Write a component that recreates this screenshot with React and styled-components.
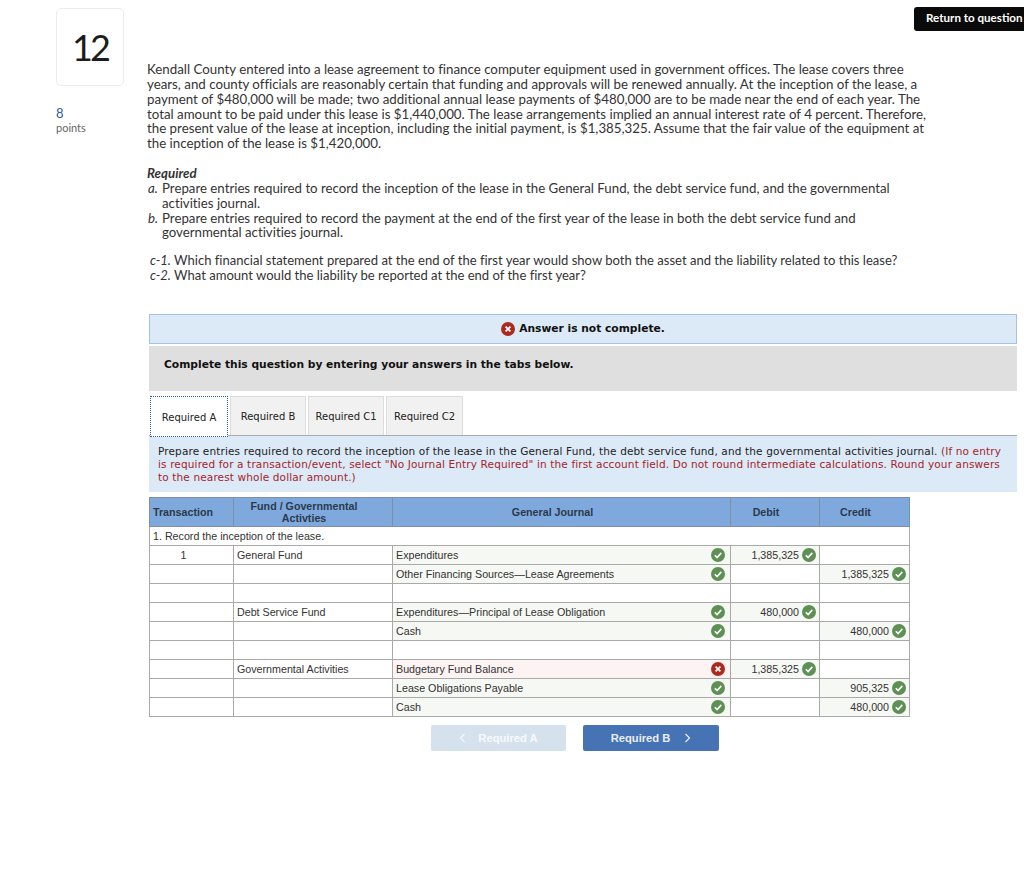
import React from "react"
import styled, { createGlobalStyle } from "styled-components"

const GlobalStyle = createGlobalStyle`
  html, body {
    margin: 0;
    padding: 0;
    background: #fff;
  }
  body {
    overflow: hidden;
    font-family: "Lato", "Liberation Sans", sans-serif;
    font-variant-ligatures: none;
  }
`

const Page = styled.div`
  position: relative;
  width: 1024px;
  height: 887px;
  overflow: hidden;
  display: grid;
  grid-template-columns: 91px 1fr;
  padding: 8px 7px 0 56px;
  box-sizing: border-box;
`

const ReturnButton = styled.button`
  position: absolute;
  top: 7px;
  left: 914px;
  width: 116px;
  height: 24px;
  padding: 0 0 3px 12px;
  text-align: left;
  border: 0;
  border-radius: 3px;
  background: #0a0a0a;
  color: #fff;
  font: 700 11.6px "Lato", "Liberation Sans", sans-serif;
  white-space: nowrap;
`

const Side = styled.aside`
  display: flex;
  flex-direction: column;
`

const NumberBox = styled.div`
  width: 68px;
  height: 78px;
  box-sizing: border-box;
  border: 1px solid #ececec;
  border-radius: 5px;
  display: flex;
  align-items: center;
  justify-content: center;
  font-size: 36px;
  letter-spacing: -3px;
  color: #1c1c1c;
`

const Points = styled.div`
  margin-top: 20px;
  font-size: 11px;
  line-height: 15px;
  color: #666;
  b {
    display: block;
    font-size: 13px;
    line-height: 14px;
    font-weight: 400;
    color: #2b5a9e;
  }
`

const Main = styled.main`
  padding-top: 54px;
  min-width: 0;
`

const Prose = styled.div`
  width: 781px;
  font-size: 13.3px;
  line-height: 14.85px;
  color: #333;
`

const Heading = styled.div`
  margin-top: 15px;
  font-weight: 700;
  font-style: italic;
`

const Hanging = styled.div`
  padding-left: 15px;
  text-indent: -14px;
  width: 745px;
  font-size: 13.25px;
  i {
    display: inline-block;
    text-indent: 0;
    width: 14px;
  }
`

const Parts = styled.div`
  margin-top: 13px;
  padding-left: 3px;
  font-size: 13.05px;
`

const Notice = styled.div`
  margin: 31px 0 0 2px;
  height: 30px;
  box-sizing: border-box;
  background: #dce9f7;
  border: 1px solid #a4c2e4;
  display: flex;
  align-items: center;
  justify-content: center;
  gap: 4px;
  font: 700 10.7px "DejaVu Sans", sans-serif;
  color: #111;
`

const Banner = styled.div`
  margin: 2px 0 0 2px;
  height: 45px;
  box-sizing: border-box;
  padding: 12px 15px 0;
  background: #dfdfdf;
  font: 700 10.7px "DejaVu Sans", sans-serif;
  color: #111;
`

const Tabs = styled.div`
  margin: 5px 0 0 2px;
  height: 40px;
  box-sizing: border-box;
  display: flex;
  gap: 2px;
  padding-left: 1px;
  border-bottom: 1px solid #aaa;
`

const Tab = styled.div`
  height: ${p => (p.$active ? "41px" : "39px")};
  box-sizing: border-box;
  padding-top: 2px;
  display: flex;
  align-items: center;
  justify-content: center;
  width: ${p => p.$w}px;
  font: 400 10px "DejaVu Sans", sans-serif;
  color: #222;
  background: ${p => (p.$active ? "#fff" : "#f1f1f1")};
  border: ${p => (p.$active ? "1px dotted #2459a8" : "1px solid #dcdcdc")};
  border-bottom: ${p => (p.$active ? "1px dotted #2459a8" : "0")};
  white-space: nowrap;
`

const Instruction = styled.div`
  margin-left: 2px;
  height: 56px;
  box-sizing: border-box;
  padding: 9px 8px 0 9px;
  background: #dce9f7;
  font: 400 10.5px/13px "DejaVu Sans", sans-serif;
  color: #222;
  letter-spacing: 0.14px;
  span {
    color: #a5252a;
  }
`

const Journal = styled.table`
  margin: 5px 0 0 2px;
  width: 760px;
  table-layout: fixed;
  border-collapse: collapse;
  font: 400 10.7px "Liberation Sans", sans-serif;
  color: #333;
`

const Head = styled.th`
  height: 28px;
  padding: ${p => (p.$align === "left" ? "0 3px" : "0 18px 0 0")};
  background: #7fa9dd;
  border: 1px solid #7d8fa3;
  font-size: 10.7px;
  line-height: 12px;
  font-weight: 700;
  color: #2a3a4c;
  text-align: ${p => p.$align || "center"};
`

const Cell = styled.td`
  height: 18px;
  padding: ${p => (p.$align === "center" ? "0 16px 0 0" : "0 3px")};
  border: 1px solid #a9a9a9;
  white-space: nowrap;
  background: ${p => (p.$state === "ok" ? "#f6f8f3" : p.$state === "bad" ? "#fdf3f3" : "#fff")};
  text-align: ${p => p.$align || "left"};
`

const CellInner = styled.div`
  display: flex;
  align-items: center;
  justify-content: ${p => (p.$end ? "flex-end" : "space-between")};
  gap: 3px;
  padding-right: ${p => (p.$end ? 0 : 2)}px;
`

const Pager = styled.div`
  margin: 8px 0 0 284px;
  display: flex;
  gap: 17px;
`

const PagerButton = styled.button`
  width: ${p => (p.$next ? 136 : 135)}px;
  height: 26px;
  border: 0;
  border-radius: 2px;
  background: ${p => (p.$next ? "#4673b3" : "#d6e1ee")};
  color: ${p => (p.$next ? "#e8eef7" : "#f7f9fc")};
  font: 700 11.2px "Liberation Sans", sans-serif;
  display: flex;
  align-items: center;
  justify-content: center;
  gap: ${p => (p.$next ? 14 : 12)}px;
`

const Status = ({ ok = true, size = 14 }) => (
  <svg width={size} height={size} viewBox="0 0 14 14" style={{ flex: "none" }}>
    <circle cx="7" cy="7" r="7" fill={ok ? "#5e8f55" : "#ab2a20"} />
    {ok ? (
      <path d="M3.8 7.2 6.1 9.5 10.3 4.9" fill="none" stroke="#fff" strokeWidth="1.6" />
    ) : (
      <path d="M4.6 4.6 9.4 9.4M9.4 4.6 4.6 9.4" fill="none" stroke="#fff" strokeWidth="1.7" />
    )}
  </svg>
)

const Chevron = ({ left }) => (
  <svg width="7" height="10" viewBox="0 0 7 10">
    <path d={left ? "M5.5 1 1.5 5 5.5 9" : "M1.5 1 5.5 5 1.5 9"} fill="none" stroke="currentColor" strokeWidth="1.2" />
  </svg>
)

const rows = [
  { tx: "1", fund: "General Fund", acct: "Expenditures", debit: "1,385,325" },
  { acct: "Other Financing Sources—Lease Agreements", credit: "1,385,325" },
  {},
  { fund: "Debt Service Fund", acct: "Expenditures—Principal of Lease Obligation", debit: "480,000" },
  { acct: "Cash", credit: "480,000" },
  {},
  { fund: "Governmental Activities", acct: "Budgetary Fund Balance", debit: "1,385,325", bad: true },
  { acct: "Lease Obligations Payable", credit: "905,325" },
  { acct: "Cash", credit: "480,000" },
]

const Amount = ({ value }) => (
  <Cell $state={value ? "ok" : undefined}>
    {value && (
      <CellInner $end>
        {value}
        <Status />
      </CellInner>
    )}
  </Cell>
)

export default function App() {
  return (
    <Page>
      <GlobalStyle />
      <ReturnButton>Return to question</ReturnButton>
      <Side>
        <NumberBox>12</NumberBox>
        <Points>
          <b>8</b>
          points
        </Points>
      </Side>
      <Main>
        <Prose>
          Kendall County entered into a lease agreement to finance computer equipment used in government offices. The
          lease covers three years, and county officials are reasonably certain that funding and approvals will be
          renewed annually. At the inception of the lease, a payment of $480,000 will be made; two additional annual
          lease payments of $480,000 are to be made near the end of each year. The total amount to be paid under this
          lease is $1,440,000. The lease arrangements implied an annual interest rate of 4 percent. Therefore, the
          present value of the lease at inception, including the initial payment, is $1,385,325. Assume that the fair
          value of the equipment at the inception of the lease is $1,420,000.
          <Heading>Required</Heading>
          <Hanging>
            <i>a.</i>Prepare entries required to record the inception of the lease in the General Fund, the debt
            service fund, and the governmental activities journal.
          </Hanging>
          <Hanging>
            <i>b.</i>Prepare entries required to record the payment at the end of the first year of the lease in both
            the debt service fund and governmental activities journal.
          </Hanging>
          <Parts>
            <div>
              <em>c-1.</em> Which financial statement prepared at the end of the first year would show both the asset
              and the liability related to this lease?
            </div>
            <div>
              <em>c-2.</em> What amount would the liability be reported at the end of the first year?
            </div>
          </Parts>
        </Prose>
        <Notice>
          <Status ok={false} /> Answer is not complete.
        </Notice>
        <Banner>Complete this question by entering your answers in the tabs below.</Banner>
        <Tabs>
          <Tab $active $w={78}>Required A</Tab>
          <Tab $w={76}>Required B</Tab>
          <Tab $w={76}>Required C1</Tab>
          <Tab $w={77}>Required C2</Tab>
        </Tabs>
        <Instruction>
          Prepare entries required to record the inception of the lease in the General Fund, the debt service fund, and
          the governmental activities journal.{" "}
          <span>
            (If no entry is required for a transaction/event, select "No Journal Entry Required" in the first account
            field. Do not round intermediate calculations. Round your answers to the nearest whole dollar amount.)
          </span>
        </Instruction>
        <Journal>
          <colgroup>
            <col style={{ width: 84 }} />
            <col style={{ width: 159 }} />
            <col style={{ width: 338 }} />
            <col style={{ width: 89 }} />
            <col style={{ width: 90 }} />
          </colgroup>
          <thead>
            <tr>
              <Head $align="left">Transaction</Head>
              <Head>
                Fund / Governmental
                <br />
                Activties
              </Head>
              <Head>General Journal</Head>
              <Head>Debit</Head>
              <Head>Credit</Head>
            </tr>
          </thead>
          <tbody>
            <tr>
              <Cell colSpan={5}>1. Record the inception of the lease.</Cell>
            </tr>
            {rows.map((row, i) => (
              <tr key={i}>
                <Cell $align="center">{row.tx}</Cell>
                <Cell>{row.fund}</Cell>
                <Cell $state={row.acct ? (row.bad ? "bad" : "ok") : undefined}>
                  {row.acct && (
                    <CellInner>
                      {row.acct}
                      <Status ok={!row.bad} />
                    </CellInner>
                  )}
                </Cell>
                <Amount value={row.debit} />
                <Amount value={row.credit} />
              </tr>
            ))}
          </tbody>
        </Journal>
        <Pager>
          <PagerButton>
            <Chevron left /> Required A
          </PagerButton>
          <PagerButton $next>
            Required B <Chevron />
          </PagerButton>
        </Pager>
      </Main>
    </Page>
  )
}
